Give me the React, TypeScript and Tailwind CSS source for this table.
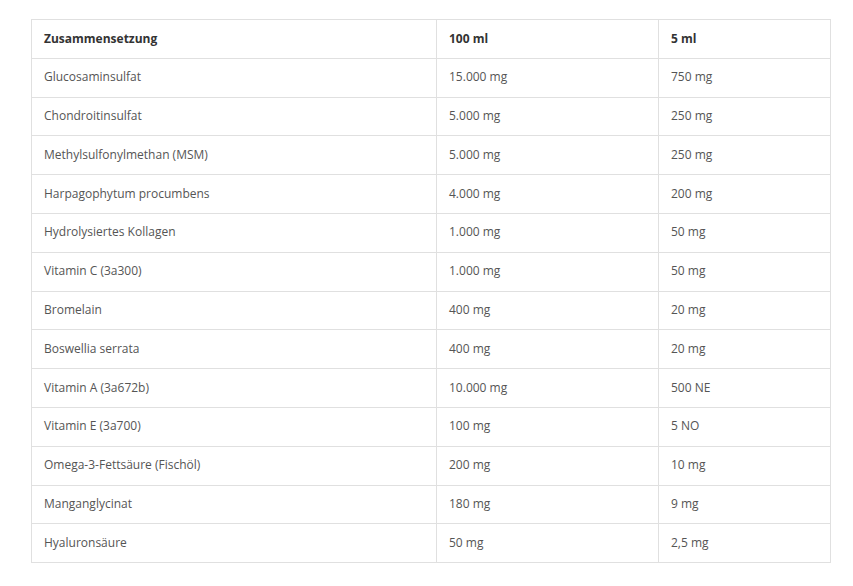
const rows: [string, string, string][] = [
  ['Glucosaminsulfat', '15.000 mg', '750 mg'],
  ['Chondroitinsulfat', '5.000 mg', '250 mg'],
  ['Methylsulfonylmethan (MSM)', '5.000 mg', '250 mg'],
  ['Harpagophytum procumbens', '4.000 mg', '200 mg'],
  ['Hydrolysiertes Kollagen', '1.000 mg', '50 mg'],
  ['Vitamin C (3a300)', '1.000 mg', '50 mg'],
  ['Bromelain', '400 mg', '20 mg'],
  ['Boswellia serrata', '400 mg', '20 mg'],
  ['Vitamin A (3a672b)', '10.000 mg', '500 NE'],
  ['Vitamin E (3a700)', '100 mg', '5 NO'],
  ['Omega-3-Fettsäure (Fischöl)', '200 mg', '10 mg'],
  ['Manganglycinat', '180 mg', '9 mg'],
  ['Hyaluronsäure', '50 mg', '2,5 mg'],
];

export default function App() {
  return (
    <div className="min-h-screen bg-white pl-[31px] pt-[19px] font-['Open_Sans',sans-serif] text-[12px] leading-[16.8px] text-[#555]">
      <table className="w-[799px] table-fixed border-collapse">
        <colgroup>
          <col className="w-[405px]" />
          <col className="w-[222px]" />
          <col className="w-[172px]" />
        </colgroup>
        <thead>
          <tr>
            {['Zusammensetzung', '100 ml', '5 ml'].map((h) => (
              <th
                key={h}
                className="border border-[#e0e0e0] px-3 py-[10.5px] text-left font-bold text-[#333]"
              >
                {h}
              </th>
            ))}
          </tr>
        </thead>
        <tbody>
          {rows.map((r) => (
            <tr key={r[0]}>
              {r.map((c, i) => (
                <td key={i} className="border border-[#e0e0e0] px-3 py-[10.5px]">
                  {c}
                </td>
              ))}
            </tr>
          ))}
        </tbody>
      </table>
    </div>
  );
}
